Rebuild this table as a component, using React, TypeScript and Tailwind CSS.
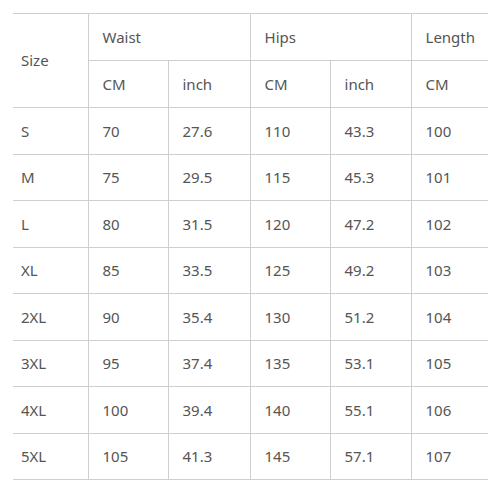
import React from "react";

const rows: [string, string, string, string, string, string][] = [
  ["S", "70", "27.6", "110", "43.3", "100"],
  ["M", "75", "29.5", "115", "45.3", "101"],
  ["L", "80", "31.5", "120", "47.2", "102"],
  ["XL", "85", "33.5", "125", "49.2", "103"],
  ["2XL", "90", "35.4", "130", "51.2", "104"],
  ["3XL", "95", "37.4", "135", "53.1", "105"],
  ["4XL", "100", "39.4", "140", "55.1", "106"],
  ["5XL", "105", "41.3", "145", "57.1", "107"],
];

export default function App() {
  const cell = "border border-[#cfcfcf] text-left align-middle font-normal pl-[14px] p-0";
  const first = "border border-[#cfcfcf] border-l-0 text-left align-middle font-normal pl-[8px] p-0";
  const last = "border border-[#cfcfcf] border-r-0 text-left align-middle font-normal pl-[14px] p-0";
  return (
    <div className="w-[497px] h-[482px] bg-white pt-[13px] pl-[13px] overflow-hidden">
      <table
        className="border-collapse table-fixed text-[15px] text-[#555555]"
        style={{ fontFamily: '"Noto Sans", "Open Sans", sans-serif', width: 475 }}
      >
        <colgroup>
          <col style={{ width: 75 }} />
          <col style={{ width: 80 }} />
          <col style={{ width: 82 }} />
          <col style={{ width: 80 }} />
          <col style={{ width: 81 }} />
          <col style={{ width: 77 }} />
        </colgroup>
        <thead>
          <tr className="h-[47px]">
            <th rowSpan={2} className={first}>Size</th>
            <th colSpan={2} className={cell}>Waist</th>
            <th colSpan={2} className={cell}>Hips</th>
            <th className={last}>Length</th>
          </tr>
          <tr className="h-[47px]">
            <th className={cell}>CM</th>
            <th className={cell}>inch</th>
            <th className={cell}>CM</th>
            <th className={cell}>inch</th>
            <th className={last}>CM</th>
          </tr>
        </thead>
        <tbody>
          {rows.map((r) => (
            <tr key={r[0]} className="h-[46.5px]">
              <td className={first}>{r[0]}</td>
              <td className={cell}>{r[1]}</td>
              <td className={cell}>{r[2]}</td>
              <td className={cell}>{r[3]}</td>
              <td className={cell}>{r[4]}</td>
              <td className={last}>{r[5]}</td>
            </tr>
          ))}
        </tbody>
      </table>
    </div>
  );
}
